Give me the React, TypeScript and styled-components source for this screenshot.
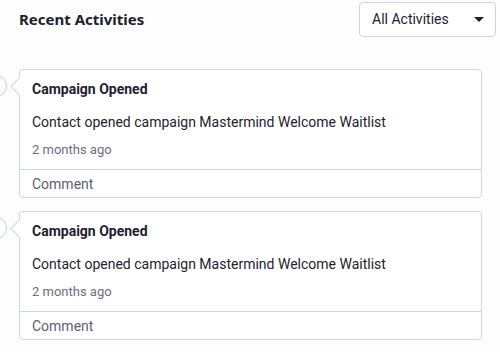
import styled, { createGlobalStyle } from "styled-components";

const GlobalStyle = createGlobalStyle`
  html, body {
    margin: 0;
    padding: 0;
    background: #fdfdfd;
    font-family: Roboto, "Noto Sans", sans-serif;
    color: #1e2230;
  }
`;

interface IActivity {
  id: number;
  title: string;
  text: string;
  time: string;
}

const activities: IActivity[] = [
  { id: 1, title: "Campaign Opened", text: "Contact opened campaign Mastermind Welcome Waitlist", time: "2 months ago" },
  { id: 2, title: "Campaign Opened", text: "Contact opened campaign Mastermind Welcome Waitlist", time: "2 months ago" },
];

const Page = styled.div`
  width: 500px;
  padding: 0 18px 0 19px;
  box-sizing: border-box;
  background: #fdfdfd;
  height: 352px;
  overflow: hidden;
`;

const Header = styled.header`
  display: flex;
  justify-content: space-between;
  align-items: center;
  height: 38px;
`;

const Title = styled.h2`
  margin: 0;
  font-family: "Noto Sans", sans-serif;
  font-size: 15px;
  font-weight: 700;
  color: #1e2230;
`;

const Select = styled.div`
  display: flex;
  align-items: center;
  justify-content: space-between;
  width: 137px;
  height: 35px;
  margin-right: -14px;
  box-sizing: border-box;
  padding: 0 11px 0 12px;
  border: 1px solid #d3d5de;
  border-radius: 4px;
  background: #fff;
  font-size: 14px;
  color: #1e2230;
`;

const Caret = styled.span`
  width: 0;
  height: 0;
  border-left: 5px solid transparent;
  border-right: 5px solid transparent;
  border-top: 5px solid #1e2230;
`;

const List = styled.ul`
  list-style: none;
  margin: 31px 0 0;
  padding: 0;
  display: flex;
  flex-direction: column;
  gap: 13px;
`;

const Item = styled.li`
  position: relative;
`;

const Dot = styled.span`
  position: absolute;
  left: -34px;
  top: 6px;
  width: 20px;
  height: 20px;
  border-radius: 50%;
  border: 1px solid #c9ccd8;
  background: #fff;
`;

const Card = styled.div`
  position: relative;
  border: 1px solid #d3d5de;
  border-radius: 4px;
  background: #fff;

  &::before {
    content: "";
    position: absolute;
    left: -7px;
    top: 10px;
    width: 12px;
    height: 12px;
    background: #fff;
    border-left: 1px solid #d3d5de;
    border-bottom: 1px solid #d3d5de;
    transform: rotate(45deg);
  }
`;

const Body = styled.div`
  padding: 9px 12px 10px;
  display: flex;
  flex-direction: column;
`;

const CardTitle = styled.div`
  font-size: 14px;
  font-weight: 700;
  line-height: 20px;
`;

const Text = styled.div`
  font-size: 14px;
  line-height: 20px;
  margin-top: 13px;
`;

const Time = styled.div`
  font-size: 13px;
  line-height: 18px;
  color: #6b6f80;
  margin-top: 9px;
`;

const Footer = styled.div`
  border-top: 1px solid #d3d5de;
  padding: 5px 12px 4px;
  font-size: 14px;
  line-height: 18px;
  color: #5c6070;
`;

function App() {
  return (
    <Page>
      <GlobalStyle />
      <Header>
        <Title>Recent Activities</Title>
        <Select>
          All Activities
          <Caret />
        </Select>
      </Header>
      <List>
        {activities.map((a) => (
          <Item key={a.id}>
            <Dot />
            <Card>
              <Body>
                <CardTitle>{a.title}</CardTitle>
                <Text>{a.text}</Text>
                <Time>{a.time}</Time>
              </Body>
              <Footer>Comment</Footer>
            </Card>
          </Item>
        ))}
      </List>
    </Page>
  );
}

export default App;
